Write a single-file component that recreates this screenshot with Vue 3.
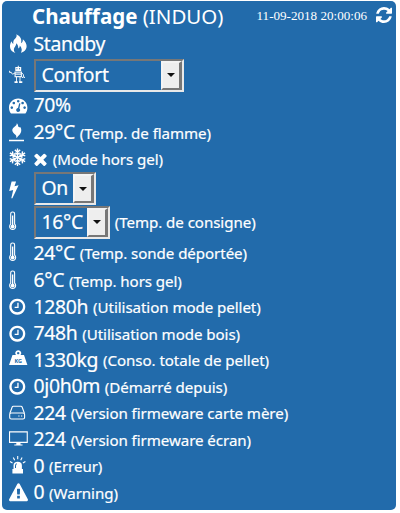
<script setup>
import { ref } from 'vue'

const rows = ref([
  { icon: 'fire', value: 'Standby', h: 27 },
  { icon: 'robot', select: 'Confort', w: 150, h: 34 },
  { icon: 'gauge', value: '70%', h: 27 },
  { icon: 'burner', value: '29°C', label: '(Temp. de flamme)', h: 27 },
  { icon: 'snow', cross: true, label: '(Mode hors gel)', h: 26 },
  { icon: 'bolt', select: 'On', w: 62, h: 33 },
  { icon: 'thermo', select: '16°C', w: 76, label: '(Temp. de consigne)', h: 34 },
  { icon: 'thermo', value: '24°C', label: '(Temp. sonde déportée)', h: 28 },
  { icon: 'thermo', value: '6°C', label: '(Temp. hors gel)', h: 27 },
  { icon: 'clock', value: '1280h', label: '(Utilisation mode pellet)', h: 26.5 },
  { icon: 'clock', value: '748h', label: '(Utilisation mode bois)', h: 26.5 },
  { icon: 'weight', value: '1330kg', label: '(Conso. totale de pellet)', h: 26.5 },
  { icon: 'clock', value: '0j0h0m', label: '(Démarré depuis)', h: 26.5 },
  { icon: 'drive', value: '224', label: '(Version firmeware carte mère)', h: 26.5 },
  { icon: 'screen', value: '224', label: '(Version firmeware écran)', h: 26.5 },
  { icon: 'siren', value: '0', label: '(Erreur)', h: 26.5 },
  { icon: 'warning', value: '0', label: '(Warning)', h: 26.5 },
])
</script>

<template>
  <section class="panel">
    <header class="head">
      <h1 class="title"><b>Chauffage</b> (INDUO)</h1>
      <time class="date">11-09-2018 20:00:06</time>
      <svg class="refresh" viewBox="128 128 1536 1536"><path d="M1639 1056q0 5-1 7-64 268-268 434.5t-478 166.5q-146 0-282.5-55t-243.5-157l-129 129q-19 19-45 19t-45-19-19-45v-448q0-26 19-45t45-19h448q26 0 45 19t19 45-19 45l-137 137q71 66 161 102t187 36q134 0 250-65t186-179q11-17 53-117 8-23 30-23h192q13 0 22.5 9.5t9.5 22.5zm25-800v448q0 26-19 45t-45 19h-448q-26 0-45-19t-19-45 19-45l138-138q-148-137-349-137-134 0-250 65t-186 179q-11 17-53 117-8 23-30 23h-199q-13 0-22.5-9.5t-9.5-22.5v-7q65-268 270-434.5t480-166.5q146 0 284 55.5t245 156.5l130-129q19-19 45-19t45 19 19 45z" /></svg>
    </header>

    <div v-for="(row, i) in rows" :key="i" class="row" :style="{ height: row.h + 'px' }">
      <svg class="icon" viewBox="0 0 20 20">
        <path v-if="row.icon === 'fire'" d="M8.300-.8C13 1.500 14 4.500 13 8.300C14.600 7.500 15 6 14.800 4.300C17.500 6.500 18.900 9.500 18.600 12C18.200 15 16 17 12.800 17.800C14.500 15.500 13.800 12.800 11.800 10.500C11.800 12 11.300 13 10.300 13.500C10.400 11.300 9.700 9.600 8.200 8.200C8.400 11 5.900 12 5.900 14.600C5.900 16 6.500 17.100 7.400 17.900C4.200 17 2.200 14.800 2 12C1.800 9.700 2.500 8 3.500 6.200C4 7.700 4.500 8.500 5.300 9C5 6.500 5.600 4.900 7.500 3.200C8.700 2 8.900.6 8.300-.8Z" />
        <g v-else-if="row.icon === 'robot'">
          <path fill-rule="evenodd" d="M9.800 .8h1v1.200h2.400v3.900H7.300V2h2.500ZM8.400 3.200v1h1v-1Zm2.600 0v1h1v-1Z" />
          <path fill-rule="evenodd" opacity=".9" d="M6.500 6.600h7.500v5.600H6.500Zm1.200 1.200v.8h5.100v-.8Zm0 2v1.200h5.100V9.800Z" />
          <path class="thin" d="M7 8 4.500 9.200 2.500 6.800M1.500 5.800v1.600h1.800M13.500 7.500l2 2.300v2M14.500 13v-1h2v1M8.500 12V17M12 12V17" />
          <path d="M6.500 16.300h3.200v1.700H6.500Zm4.600 0h3.200v1.700h-3.200Z" />
        </g>
        <path v-else-if="row.icon === 'gauge'" fill-rule="evenodd" d="M3 17.400C1.600 15.700 1 13.800 1 11.700C1 6.500 5.100 2.500 10.200 2.500S19.400 6.500 19.400 11.700C19.400 13.800 18.800 15.700 17.400 17.400ZM3.800 10.300a1.300 1.300 0 1 0 .01 0ZM5.800 5.700a1.300 1.300 0 1 0 .01 0ZM10.200 3.900a1.300 1.300 0 1 0 .01 0ZM14.600 5.700a1.300 1.300 0 1 0 .01 0ZM16.600 10.300a1.300 1.300 0 1 0 .01 0ZM11.200 7.300 10 12A2 2 0 1 0 11.400 12.400L12.400 7.600Z" />
        <g v-else-if="row.icon === 'burner'">
          <path d="M8.800.2C11.200 2.400 8.800 4 12.500 4.300C13.800 6.600 13.500 9.600 11.700 11.500C10.600 12.700 9.300 14 8.500 15.200C8.300 13.800 8.600 12.800 7.400 11.700C4 8.700 3.200 6.500 6 4.200C7.500 3 8.900 1.800 8.800.2Z" />
          <path d="M1 16.800h15v1.400H1Z" />
        </g>
        <g v-else-if="row.icon === 'snow'" class="line snow">
          <path v-for="a in 6" :key="a" :transform="`rotate(${a * 60} 9.500 8.300)`" d="M9.500 8.300V-.5M6.800.9 9.500 3.200 12.200.9M7.300 3.800 9.500 5.600 11.700 3.800" />
        </g>
        <path v-else-if="row.icon === 'bolt'" d="M3.600 2.500H8.100L6.500 7.200 10.600 6.200 4.400 19.300H3.300L5.200 11.100 1.200 12.100Z" />
        <g v-else-if="row.icon === 'thermo'">
          <path class="line" d="M2.700 2A1.950 1.950 0 0 1 6.600 2V12.200A3 3 0 1 1 2.700 12.200Z" />
          <path d="M4 3.500H5.300V12.700A2 2 0 1 1 4 12.700Z" />
        </g>
        <svg v-else-if="row.icon === 'clock'" x="1.300" y="1.700" width="16" height="16" viewBox="128 128 1536 1536"><path d="M1024 544v448q0 14-9 23t-23 9h-320q-14 0-23-9t-9-23v-64q0-14 9-23t23-9h224v-352q0-14 9-23t23-9h64q14 0 23 9t9 23zm416 352q0-148-73-273t-198-198-273-73-273 73-198 198-73 273 73 273 198 198 273 73 273-73 198-198 73-273zm224 0q0 209-103 385.500t-279.500 279.500-385.500 103-385.500-103-279.500-279.500-103-385.500 103-385.500 279.500-279.500 385.500-103 385.500 103 279.500 279.500 103 385.500z" /></svg>
        <g v-else-if="row.icon === 'weight'">
          <path fill-rule="evenodd" d="M4.500 5H8A2.900 2.900 0 1 1 12.500 5H16L19.400 15H1ZM10.200 1.900a1.200 1.200 0 1 0 .01 0Z" />
          <text class="kg" x="10.200" y="12.500">KG</text>
        </g>
        <g v-else-if="row.icon === 'drive'" class="line">
          <path d="M1.800 10.500 4.200 4Q4.500 3.200 5.300 3.200H13Q13.800 3.200 14.100 4L16.500 10.500" />
          <rect x="1.700" y="10" width="14.900" height="6" rx="1.600" />
          <path d="M10.300 13H11.500M13 13H14.200" />
        </g>
        <g v-else-if="row.icon === 'screen'">
          <path fill-rule="evenodd" d="M1 1.200H19.800V13.100H1ZM2.100 2.400V11.700H18.700V2.400Z" />
          <path d="M8.300 13H12.500V14.400H14.500V15.500H6.300V14.400H8.300Z" />
        </g>
        <g v-else-if="row.icon === 'siren'">
          <path fill-rule="evenodd" d="M5.500 13V9.500Q5.500 5.800 9.700 5.800T13.900 9.500V13H15V17.500H4.400V13ZM7 12H8V9.700Q8 8.500 9 8V7.300Q7 7.800 7 9.700Z" />
          <path class="line" d="M9.700 0V3.300M5.300 1.500 6.700 4.300M14.100 1.500 12.700 4.300M2 5.500 4.500 7M17.400 5.500 14.900 7" />
        </g>
        <svg v-else x="1" y=".3" width="19" height="18" viewBox="0 0 1792 1664" preserveAspectRatio="none"><path d="M1024 1375v-190q0-14-9.500-23.500t-22.500-9.500h-192q-13 0-22.500 9.500t-9.500 23.500v190q0 14 9.500 23.500t22.500 9.500h192q13 0 22.500-9.500t9.500-23.500zm-2-374l18-459q0-12-10-19-13-11-24-11h-220q-11 0-24 11-10 7-10 21l17 457q0 10 10 16.500t24 6.500h185q14 0 23.500-6.500t10.500-16.500zm-14-934l768 1408q35 63-2 126-17 29-46.500 46t-63.500 17h-1536q-34 0-63.500-17t-46.500-46q-37-63-2-126l768-1408q17-31 47-49t65-18 65 18 47 49z" /></svg>
      </svg>

      <div v-if="row.select" class="select" :style="{ width: row.w + 'px' }">
        <span class="chosen">{{ row.select }}</span>
        <span class="arrow"><svg viewBox="0 0 8 4"><path d="M0 0H8L4 4Z" /></svg></span>
      </div>
      <svg v-else-if="row.cross" class="cross" viewBox="302 302 1188 1252"><path d="M1490 1322q0 40-28 68l-136 136q-28 28-68 28t-68-28l-294-294-294 294q-28 28-68 28t-68-28l-136-136q-28-28-28-68t28-68l294-294-294-294q-28-28-28-68t28-68l136-136q28-28 68-28t68 28l294 294 294-294q28-28 68-28t68 28l136 136q28 28 28 68t-28 68l-294 294 294 294q28 28 28 68z" /></svg>
      <span v-else class="value">{{ row.value }}</span>
      <span v-if="row.label" class="label">{{ row.label }}</span>
    </div>
  </section>
</template>

<style>
body { background: #fff; }
</style>

<style scoped>
.panel {
  box-sizing: border-box;
  width: 394px;
  height: 509px;
  margin: 1px 0 0 2px;
  padding-left: 6px;
  border-radius: 5px;
  background: #226bab;
  color: #fff;
  font-family: "Noto Sans", sans-serif;
  overflow: hidden;
}
svg { fill: #fff; flex: none; overflow: visible; }
.head {
  display: flex;
  align-items: center;
  height: 30px;
  padding: 0 4px 0 24px;
}
.title {
  flex: 1;
  margin: 0;
  font-size: 20.5px;
  line-height: 28px;
  font-weight: 400;
  white-space: nowrap;
}
.date {
  font-family: "Liberation Serif", serif;
  font-size: 13.1px;
  line-height: 28px;
  white-space: nowrap;
}
.refresh { width: 16px; height: 16px; margin-left: 9px; margin-top: -3px; }
.row {
  display: flex;
  align-items: center;
  white-space: nowrap;
}
.icon { width: 20px; height: 20px; margin-right: 6px; }
.line { fill: none; stroke: #fff; stroke-width: 1.1; }
.thin { fill: none; stroke: #fff; stroke-width: 0.9; }
.snow { stroke-width: 1.4; }
.kg {
  fill: #226bab;
  font: 700 5.5px "Noto Sans", sans-serif;
  text-anchor: middle;
}
.value {
  margin-left: -0.5px;
  padding-bottom: 2px;
  font-size: 19.4px;
  line-height: 25px;
  letter-spacing: -0.32px;
  -webkit-text-stroke: 0.2px #fff;
}
.label {
  margin-left: 4.8px;
  font-size: 15.1px;
  line-height: 24px;
  letter-spacing: -0.06px;
  -webkit-text-stroke: 0.2px #fff;
}
.cross { width: 13px; height: 13px; margin-right: 1px; }
.select {
  box-sizing: border-box;
  display: flex;
  height: 33px;
  border: 2px solid;
  border-color: #777 #e9e9e9 #e9e9e9 #777;
}
.chosen {
  flex: 1;
  padding-left: 5.5px;
  font-size: 19.4px;
  line-height: 28px;
  letter-spacing: -0.32px;
  -webkit-text-stroke: 0.2px #fff;
}
.arrow {
  box-sizing: border-box;
  display: flex;
  align-items: center;
  justify-content: center;
  width: 21px;
  border: 2px solid;
  border-color: #f4f4f4 #777 #777 #f4f4f4;
  border-right-width: 3px;
  background: #eee;
}
.arrow svg { width: 8px; height: 4px; fill: #111; }
</style>
